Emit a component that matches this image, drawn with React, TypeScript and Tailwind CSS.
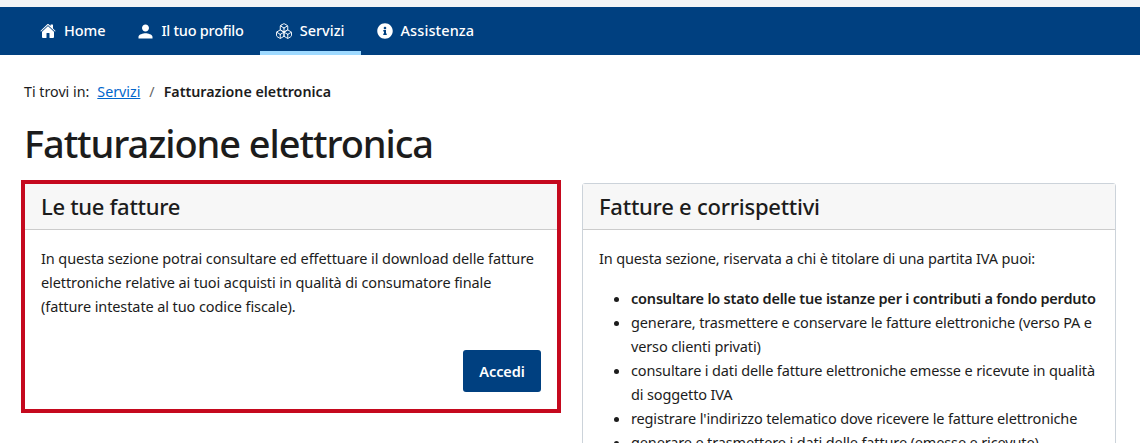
import React from 'react';
import { Boxes } from 'lucide-react';
import { FaInfoCircle } from 'react-icons/fa';
import { IoHome } from 'react-icons/io5';
import { MdPerson } from 'react-icons/md';

const NavItem: React.FC<{ label: string; active?: boolean; spacing: string; icon: React.ReactNode }> = ({ label, active, spacing, icon }) => (
  <a
    className={`flex h-12 items-center gap-2 border-b-4 px-4 pt-1 text-[14.5px] font-medium text-white ${spacing} ${
      active ? 'border-[#9fdaff]' : 'border-transparent'
    }`}
  >
    <span className="flex w-4 justify-center">{icon}</span>
    {label}
  </a>
);

const App: React.FC = () => {
  return (
    <div className="h-[443px] overflow-hidden bg-white font-['Noto_Sans',sans-serif] text-[#1c1c1c]">
      <div className="h-[7px] bg-[#f3f4f6]" />
      <nav className="flex h-12 bg-[#004080] pl-6">
        <NavItem label="Home" spacing="tracking-[-0.1px]" icon={<IoHome size={16} />} />
        <NavItem label="Il tuo profilo" spacing="tracking-[-0.24px]" icon={<MdPerson size={21} className="shrink-0" />} />
        <NavItem label="Servizi" active spacing="tracking-[0px]" icon={<Boxes size={18} strokeWidth={1.25} className="shrink-0" />} />
        <NavItem label="Assistenza" spacing="tracking-[0.1px]" icon={<FaInfoCircle size={16} />} />
      </nav>

      <div className="px-6 pt-[25px]">
        <div className="flex items-center text-[14.25px] leading-6">
          <span>Ti trovi in:</span>
          <a className="ml-2 text-[#0066cc] underline">Servizi</a>
          <span className="mx-[9px] text-[#666]">/</span>
          <strong className="font-semibold">Fatturazione elettronica</strong>
        </div>
        <h1 className="mt-[15px] text-[38px] leading-[48px] font-medium tracking-[-1.08px]">Fatturazione elettronica</h1>

        <div className="mt-[16px] grid grid-cols-2 gap-6">
          <div className="h-[227px] border border-[#ccd3da] bg-white outline-[4px] -outline-offset-1 outline-[#c5091e]">
            <div className="flex h-[46px] items-center border-b border-[#ccc] bg-[#f7f7f7] px-4 text-[22px] font-medium tracking-[-0.3px]">
              Le tue fatture
            </div>
            <div className="px-4 pt-4 text-[14.5px] leading-6 tracking-[-0.1px]">
              <p className="whitespace-nowrap">In questa sezione potrai consultare ed effettuare il download delle fatture</p>
              <p className="whitespace-nowrap">elettroniche relative ai tuoi acquisti in qualità di consumatore finale</p>
              <p className="whitespace-nowrap">(fatture intestate al tuo codice fiscale).</p>
              <div className="mt-8 flex justify-end">
                <button className="h-[42px] w-[78px] rounded-[3px] bg-[#004080] text-[14.5px] font-semibold text-white">
                  Accedi
                </button>
              </div>
            </div>
          </div>

          <div className="rounded-[3px] border border-[#ccd3da]">
            <div className="flex h-[46px] items-center border-b border-[#ccc] bg-[#f7f7f7] px-4 text-[22px] font-medium tracking-[-0.25px]">
              Fatture e corrispettivi
            </div>
            <div className="px-4 pt-4 text-[14.5px] leading-6 tracking-[-0.14px]">
              <p>In questa sezione, riservata a chi è titolare di una partita IVA puoi:</p>
              <ul className="mt-4 list-disc whitespace-nowrap pl-8">
                <li className="font-semibold tracking-[-0.2px]">consultare lo stato delle tue istanze per i contributi a fondo perduto</li>
                <li>
                  generare, trasmettere e conservare le fatture elettroniche (verso PA e
                  <br />
                  verso clienti privati)
                </li>
                <li>
                  consultare i dati delle fatture elettroniche emesse e ricevute in qualità
                  <br />
                  di soggetto IVA
                </li>
                <li>registrare l'indirizzo telematico dove ricevere le fatture elettroniche</li>
                <li>generare e trasmettere i dati delle fatture (emesse e ricevute)</li>
              </ul>
            </div>
          </div>
        </div>
      </div>
    </div>
  );
};

export default App;
